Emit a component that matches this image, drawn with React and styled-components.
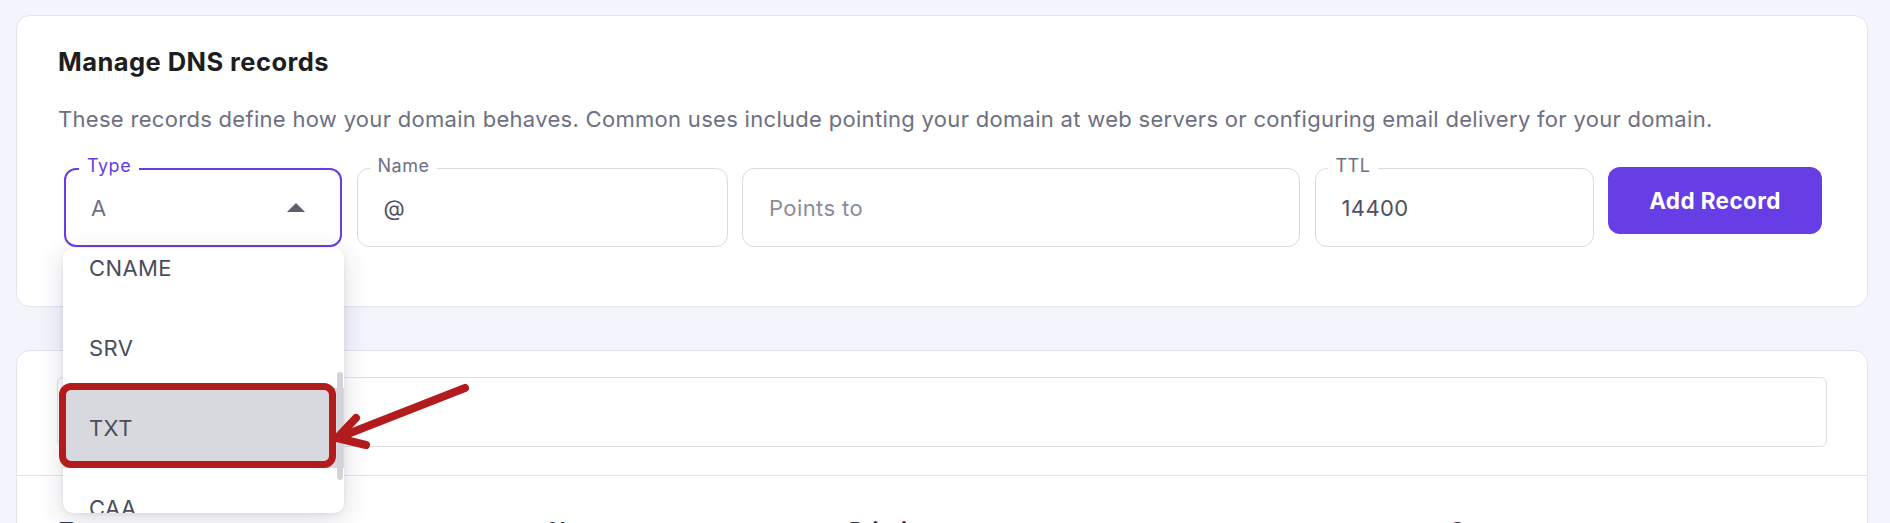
import React from "react";
import styled, { createGlobalStyle } from "styled-components";

const GlobalStyle = createGlobalStyle`
  html, body { margin: 0; padding: 0; background: #f4f4fc; overflow: hidden; }
  body { font-family: Inter, "Liberation Sans", sans-serif; }
  * { box-sizing: border-box; }
`;

const Page = styled.div`
  display: flex;
  flex-direction: column;
  gap: 43px;
  padding: 15px 22px 0 16px;
  height: 523px;
`;

const Card = styled.section`
  background: #ffffff;
  border: 1px solid #e3e4ec;
  border-radius: 14px;
  flex-shrink: 0;
`;

const ManageCard = styled(Card)`
  height: 292px;
  padding: 31px 45px 0 41px;
`;

const Title = styled.h2`
  margin: 0;
  font-size: 25.5px;
  line-height: 30px;
  font-weight: 700;
  letter-spacing: 0.45px;
  color: #1d1e20;
`;

const Description = styled.p`
  margin: 28px 0 0;
  font-size: 22px;
  line-height: 28px;
  letter-spacing: 0.3px;
  color: #6d7081;
`;

const FieldRow = styled.div`
  display: flex;
  align-items: flex-start;
  gap: 14.5px;
  margin-top: 35px;
  padding-left: 6px;
`;

const Field = styled.div`
  position: relative;
  flex-shrink: 0;
  width: ${(p) => p.$w}px;
  height: 79px;
  display: flex;
  align-items: center;
  border: ${(p) => (p.$active ? "2px solid #673de6" : "1px solid #dadbe2")};
  border-radius: 12px;
  padding: 0 ${(p) => (p.$active ? 35 : 26)}px 0 ${(p) => (p.$active ? 25 : 26)}px;
  font-size: 22px;
  letter-spacing: 0.4px;
  color: ${(p) => (p.$placeholder ? "#8a8c99" : p.$active ? "#6f7183" : "#4f5162")};
  background: #fff;
`;

const FieldLabel = styled.span`
  position: absolute;
  top: ${(p) => (p.$active ? -13 : -12)}px;
  left: ${(p) => (p.$active ? 13 : 12)}px;
  padding: 0 8px;
  background: #fff;
  font-size: 18px;
  line-height: 18px;
  letter-spacing: 0.5px;
  color: ${(p) => (p.$active ? "#673de6" : "#6d7081")};
`;

const Caret = styled.svg`
  margin-left: auto;
  display: block;
`;

const AddButton = styled.button`
  flex-shrink: 0;
  width: 214px;
  height: 67px;
  margin-top: -1px;
  border: none;
  border-radius: 12px;
  background: #673de6;
  color: #fff;
  font-family: inherit;
  font-size: 22.5px;
  letter-spacing: 0.4px;
  font-weight: 700;
`;

const Dropdown = styled.div`
  position: absolute;
  top: 78px;
  left: -3px;
  width: 281px;
  height: 265px;
  z-index: 10;
`;

const Viewport = styled.div`
  height: 100%;
  overflow: hidden;
  border-radius: 10px;
  background: #fff;
  box-shadow: 0 6px 26px rgba(40, 40, 80, 0.16), 0 1px 4px rgba(40, 40, 80, 0.08);
`;

const OptionList = styled.ul`
  list-style: none;
  margin: -20px 0 0;
  padding: 0;
`;

const Option = styled.li`
  height: 80px;
  display: flex;
  align-items: center;
  padding-left: 26px;
  font-size: 22px;
  color: #4a4c5c;
  background: ${(p) => (p.$hover ? "#d8d9de" : "transparent")};
`;

const ScrollThumb = styled.div`
  position: absolute;
  left: 274px;
  top: 124px;
  width: 6px;
  height: 108px;
  border-radius: 3px;
  background: #d3d4da;
`;

const Highlight = styled.div`
  position: absolute;
  left: -4px;
  top: 135px;
  width: 277px;
  height: 85px;
  border: 7px solid #b31c1c;
  border-radius: 12px;
`;

const Arrow = styled.svg`
  position: absolute;
  left: 267px;
  top: 127px;
  overflow: visible;
`;

const RecordsCard = styled(Card)`
  padding: 26px 40px 0 40px;
  height: 260px;
`;

const SearchBox = styled.div`
  height: 70px;
  border: 1px solid #dfe0e6;
  border-radius: 6px;
`;

const Divider = styled.div`
  height: 1px;
  background: #e3e4ea;
  margin: 28px -40px 0;
`;

const HeaderRow = styled.div`
  display: grid;
  grid-template-columns: 490px 300px 600px 1fr;
  padding: 41px 0 0 2px;
  font-size: 22px;
  font-weight: 700;
  color: #36344d;
`;

const options = ["CNAME", "SRV", "TXT", "CAA"];

export default function App() {
  return (
    <>
      <GlobalStyle />
      <Page>
        <ManageCard>
          <Title>Manage DNS records</Title>
          <Description>
            These records define how your domain behaves. Common uses include pointing your domain at web servers or configuring email delivery for your domain.
          </Description>
          <FieldRow>
            <Field $w={278} $active>
              <FieldLabel $active>Type</FieldLabel>
              A
              <Caret width="18" height="9" viewBox="0 0 18 9">
                <path d="M0 9 L9 0 L18 9 Z" fill="#5e6070" />
              </Caret>
              <Dropdown>
                <Viewport>
                  <OptionList>
                    {options.map((o) => (
                      <Option key={o} $hover={o === "TXT"}>
                        {o}
                      </Option>
                    ))}
                  </OptionList>
                </Viewport>
                <ScrollThumb />
                <Highlight />
                <Arrow width="150" height="80" viewBox="0 0 150 80">
                  <path
                    d="M135 13 L10 62 M26 43 L7 63 L36 70"
                    fill="none"
                    stroke="#b31c1c"
                    strokeWidth="8"
                    strokeLinecap="round"
                    strokeLinejoin="round"
                  />
                </Arrow>
              </Dropdown>
            </Field>
            <Field $w={371}>
              <FieldLabel>Name</FieldLabel>@
            </Field>
            <Field $w={558} $placeholder>
              Points to
            </Field>
            <Field $w={279}>
              <FieldLabel>TTL</FieldLabel>14400
            </Field>
            <AddButton>Add Record</AddButton>
          </FieldRow>
        </ManageCard>
        <RecordsCard>
          <SearchBox />
          <Divider />
          <HeaderRow>
            <span>Type</span>
            <span>Name</span>
            <span>Priority</span>
            <span>Content</span>
          </HeaderRow>
        </RecordsCard>
      </Page>
    </>
  );
}
